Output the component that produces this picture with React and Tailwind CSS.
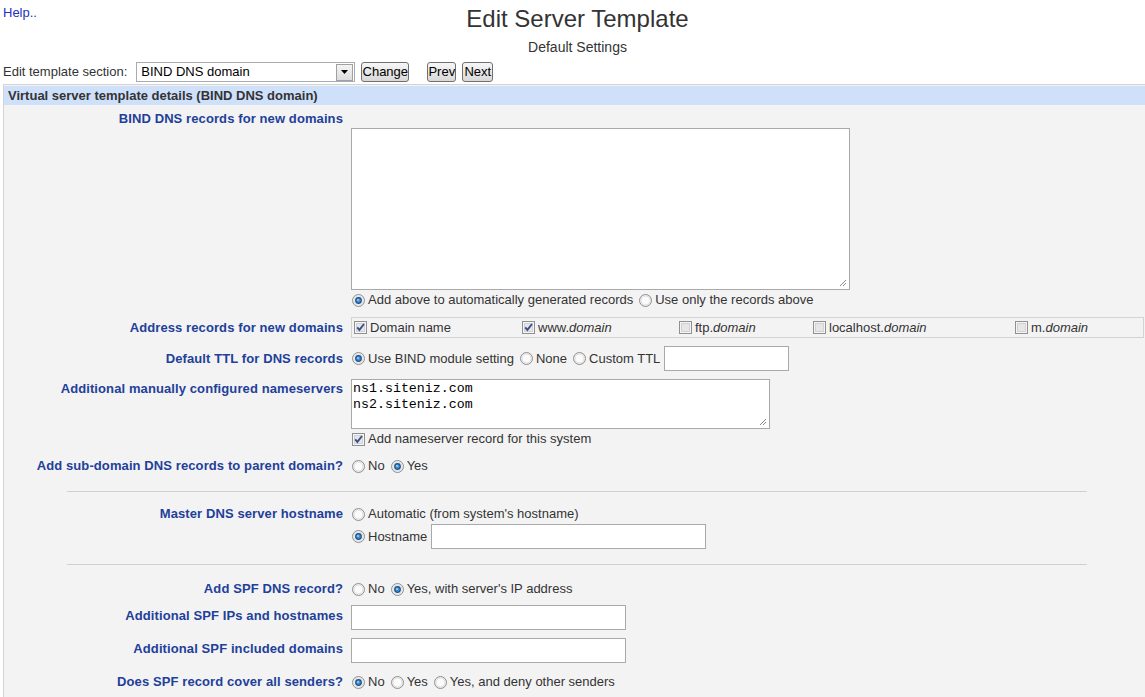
import React from 'react'

const Radio = ({ on }) => (
  <svg width="13" height="13" viewBox="0 0 13 13" className="shrink-0">
    <circle cx="6.5" cy="6.5" r="6" fill="#eeeeee" stroke="#8f9091" />
    <circle cx="6.5" cy="6.5" r="4.5" fill="#fbfbfb" stroke="#dedede" />
    {on && <circle cx="6.5" cy="6.5" r="3.4" fill="#1b4f85" />}
    {on && <circle cx="6.5" cy="6.5" r="2.2" fill="#3c8fd0" />}
    {on && <circle cx="6" cy="6" r="1" fill="#9fd3f5" />}
  </svg>
)

const Check = ({ on }) => (
  <svg width="13" height="13" viewBox="0 0 13 13" className="shrink-0">
    <rect x="0.5" y="0.5" width="12" height="12" fill="#f5f5f5" stroke="#8f9091" />
    <rect x="2.5" y="2.5" width="8" height="8" fill="#e6e6e6" stroke="#d2d2d2" />
    {on && <path d="M3.2 6.3 L5.4 8.9 L10 3" fill="none" stroke="#3c4f8c" strokeWidth="1.9" />}
  </svg>
)

const Opt = ({ on, children, check }) => (
  <span className="flex items-center">
    <span className="ml-px mr-[3px] flex">{check ? <Check on={on} /> : <Radio on={on} />}</span>
    <span>{children}</span>
  </span>
)

const Grip = () => (
  <svg width="10" height="10" viewBox="0 0 10 10" className="absolute right-[2px] bottom-[2px]">
    <path d="M9 3 L3 9 M9 6 L6 9" stroke="#8a8a8a" strokeWidth="1" />
  </svg>
)

const Label = ({ children, className = '' }) => (
  <div className={'w-[339px] mr-px shrink-0 text-right font-bold tracking-[0.1px] text-[#22409a] ' + className}>{children}</div>
)

const Btn = ({ children, w }) => (
  <div className={'h-[20px] flex items-center justify-center rounded-[3px] border border-[#707070] bg-gradient-to-b from-[#f6f6f6] to-[#d9d9d9] text-black ' + w}>
    {children}
  </div>
)

const Input = ({ w }) => <div className={'h-[25px] border border-[#a9a9a9] bg-white ' + w}></div>

export default function App() {
  return (
    <div className="min-h-screen bg-white text-[13px] leading-[16px] text-[#333] font-['Liberation_Sans',Arial,sans-serif] overflow-hidden">
      <div className="flex">
        <div className="w-[60px] pl-[3px] pt-[5px] text-[#2233bb]">Help..</div>
        <div className="flex-1 text-center pt-[5px]">
          <div className="text-[24px] leading-[28px]">Edit Server Template</div>
          <div className="mt-[5px] text-[14px] leading-[18px]">Default Settings</div>
        </div>
        <div className="w-[50px]"></div>
      </div>

      <div className="mt-[6px] flex items-center h-[20px] pl-[3px]">
        <span>Edit template section:</span>
        <div className="ml-[9px] w-[219px] h-[20px] border border-[#a5acb2] bg-white flex items-center justify-between">
          <span className="pl-[4px] text-black">BIND DNS domain</span>
          <div className="w-[17px] h-[17px] mr-px border border-[#a0a0a0] bg-gradient-to-b from-[#f4f4f4] to-[#dcdcdc] flex items-center justify-center">
            <svg width="7" height="4" viewBox="0 0 7 4"><path d="M0 0 H7 L3.5 4 Z" fill="#000" /></svg>
          </div>
        </div>
        <div className="ml-[6px]"><Btn w="w-[48px]">Change</Btn></div>
        <div className="ml-[18px]"><Btn w="w-[29px]">Prev</Btn></div>
        <div className="ml-[6px]"><Btn w="w-[31px]">Next</Btn></div>
      </div>

      <div className="mt-[2px] ml-[3px] border-l border-t border-[#d3d3d3] bg-[#f3f3f3] pb-[10px]">
        <div className="mt-px h-[19px] bg-[#cfe0fb] px-[4px] font-bold leading-[19px]">
          Virtual server template details (BIND DNS domain)
        </div>

        <div className="flex">
          <Label className="pt-[6px] leading-[15px]">BIND DNS records for new domains</Label>
          <div className="ml-[7px] pt-[23px]">
            <div className="relative w-[499px] h-[162px] border border-[#a9a9a9] bg-white"><Grip /></div>
            <div className="mt-[2px] flex gap-[5px] h-[16px]">
              <Opt on>Add above to automatically generated records</Opt>
              <Opt>Use only the records above</Opt>
            </div>
          </div>
        </div>

        <div className="mt-[9px] flex items-center">
          <Label>Address records for new domains</Label>
          <div className="ml-[7px] w-[793px] h-[21px] border border-[#d3d3d3] flex items-center pl-px">
            <div className="w-[168px]"><Opt on check>Domain name</Opt></div>
            <div className="w-[157px]"><Opt on check>www.<i>domain</i></Opt></div>
            <div className="w-[134px]"><Opt check>ftp.<i>domain</i></Opt></div>
            <div className="w-[202px]"><Opt check>localhost.<i>domain</i></Opt></div>
            <div><Opt check>m.<i>domain</i></Opt></div>
          </div>
        </div>

        <div className="mt-[8px] flex items-center">
          <Label>Default TTL for DNS records</Label>
          <div className="ml-[7px] flex items-center gap-[5px]">
            <Opt on>Use BIND module setting</Opt>
            <Opt>None</Opt>
            <Opt>Custom TTL</Opt>
            <Input w="w-[125px] -ml-px" />
          </div>
        </div>

        <div className="mt-[8px] flex">
          <Label className="pt-[2px] leading-[15px]">Additional manually configured nameservers</Label>
          <div className="ml-[7px]">
            <div className="relative w-[419px] h-[50px] border border-[#a9a9a9] bg-white pl-px pt-px font-['Liberation_Mono','Courier_New',monospace] text-[13.3px] leading-[16px] text-black">
              <div>ns1.siteniz.com</div>
              <div>ns2.siteniz.com</div>
              <Grip />
            </div>
            <div className="mt-[2px] h-[16px] flex">
              <Opt on check>Add nameserver record for this system</Opt>
            </div>
          </div>
        </div>

        <div className="mt-[11px] flex items-center h-[16px]">
          <Label>Add sub-domain DNS records to parent domain?</Label>
          <div className="ml-[7px] flex gap-[5px]">
            <Opt>No</Opt>
            <Opt on>Yes</Opt>
          </div>
        </div>

        <div className="mt-[17px] ml-[63px] w-[1020px] border-t border-[#d0d0d0]"></div>

        <div className="mt-[14px] flex items-center h-[16px]">
          <Label>Master DNS server hostname</Label>
          <div className="ml-[7px] flex">
            <Opt>Automatic (from system's hostname)</Opt>
          </div>
        </div>
        <div className="mt-[2px] flex items-center h-[25px]">
          <div className="w-[340px] shrink-0"></div>
          <div className="ml-[7px] flex items-center gap-[4px]">
            <Opt on>Hostname</Opt>
            <Input w="w-[275px]" />
          </div>
        </div>

        <div className="mt-[15px] ml-[63px] w-[1020px] border-t border-[#d0d0d0]"></div>

        <div className="mt-[16px] flex items-center h-[16px]">
          <Label>Add SPF DNS record?</Label>
          <div className="ml-[7px] flex gap-[5px]">
            <Opt>No</Opt>
            <Opt on>Yes, with server's IP address</Opt>
          </div>
        </div>

        <div className="mt-[8px] flex">
          <Label className="pt-[3px] leading-[15px]">Additional SPF IPs and hostnames</Label>
          <div className="ml-[7px]"><Input w="w-[275px]" /></div>
        </div>

        <div className="mt-[8px] flex">
          <Label className="pt-[3px] leading-[15px]">Additional SPF included domains</Label>
          <div className="ml-[7px]"><Input w="w-[275px]" /></div>
        </div>

        <div className="mt-[11px] flex items-center h-[16px]">
          <Label>Does SPF record cover all senders?</Label>
          <div className="ml-[7px] flex gap-[5px]">
            <Opt on>No</Opt>
            <Opt>Yes</Opt>
            <Opt>Yes, and deny other senders</Opt>
          </div>
        </div>
      </div>
    </div>
  )
}
